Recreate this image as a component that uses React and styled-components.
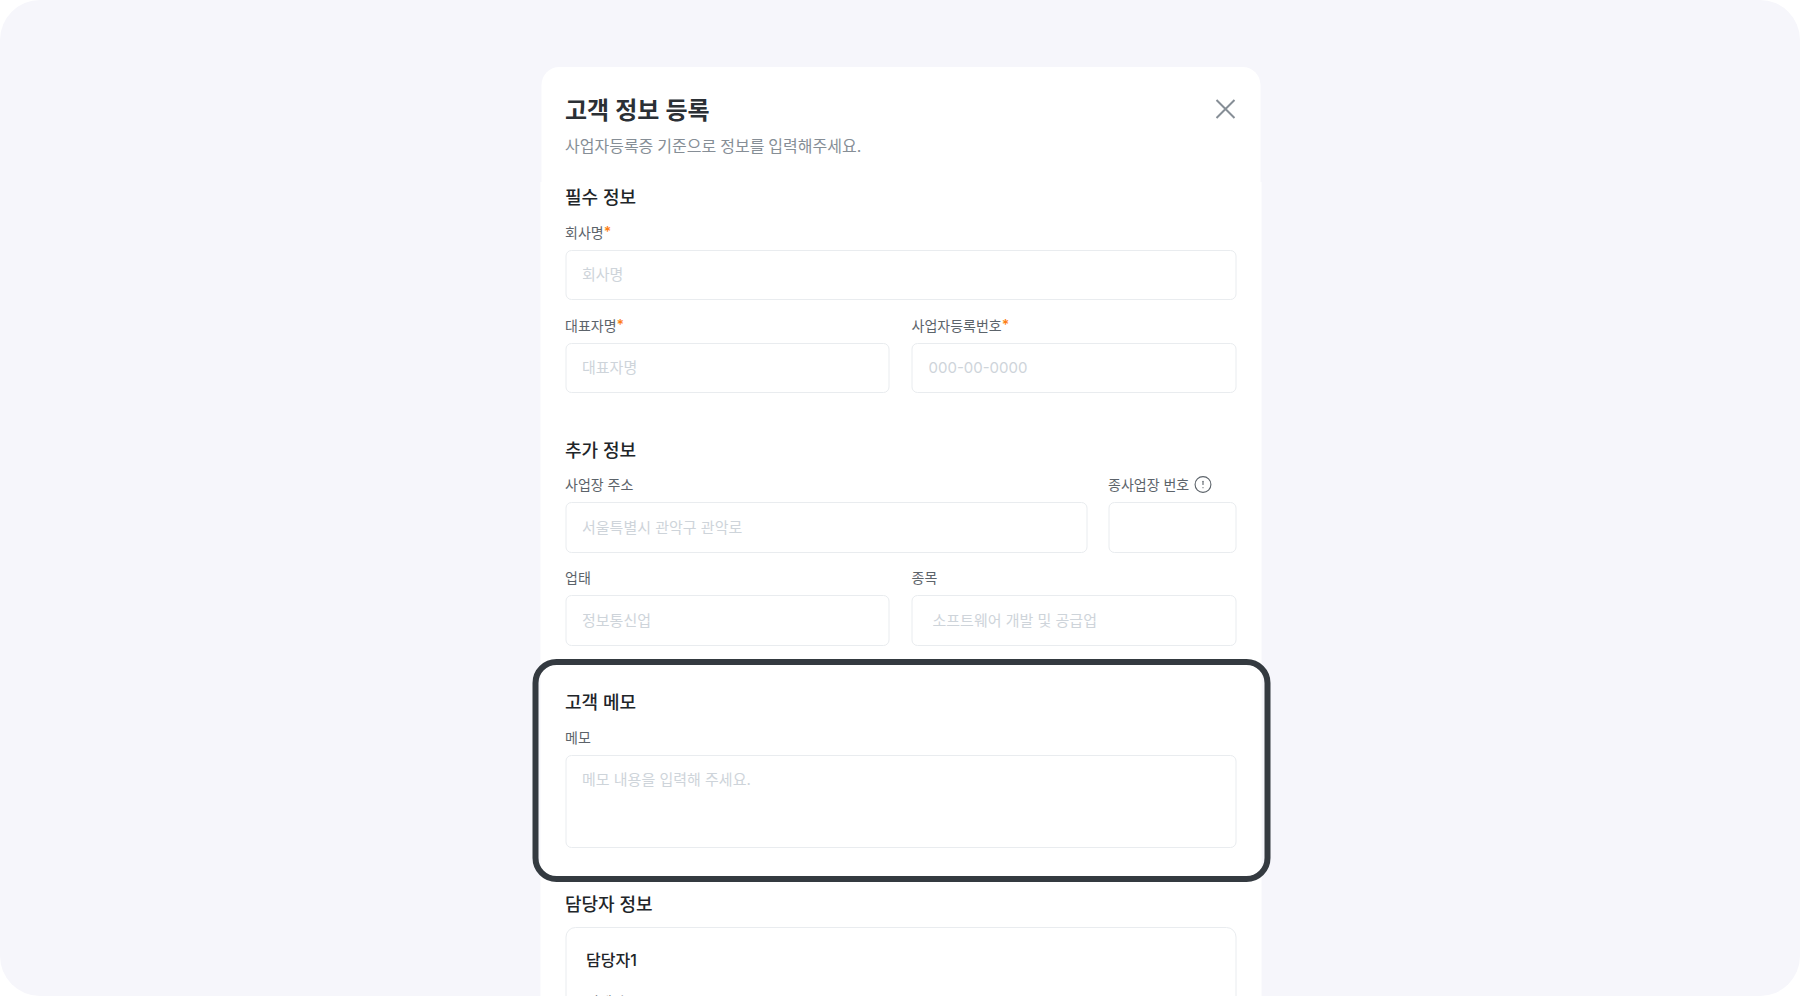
import React from 'react';
import styled, { createGlobalStyle } from 'styled-components';
import { CircleAlert } from 'lucide-react';

const GlobalStyle = createGlobalStyle`
    html, body {
        margin: 0;
        background-color: #fff;
        overflow: hidden;
    }

    * {
        box-sizing: border-box;
    }
`;

const Page = styled.div`
    height: 996px;
    padding-top: 67px;
    background-color: #f6f6fb;
    border-radius: 40px;
    overflow: hidden;
    font-family: 'Inter', 'Noto Sans CJK KR', 'Noto Sans', sans-serif;
`;

const Modal = styled.div`
    width: 721px;
    margin: 0 auto;
    transform: translateX(0.5px);
`;

const ModalHeader = styled.header`
    position: relative;
    margin: 0 1px;
    padding: 28px 24px 0;
    height: 115px;
    background-color: #fff;
    border-radius: 18px 18px 0 0;
`;

const ModalTitle = styled.h2`
    margin: 0;
    font-size: 24px;
    line-height: 32px;
    font-weight: 600;
    color: #2b3035;
`;

const ModalSubtitle = styled.p`
    margin: 6.5px 0 0;
    font-size: 16px;
    line-height: 24px;
    font-weight: 400;
    word-spacing: -0.5px;
    color: #868e96;
`;

const CloseButton = styled.button`
    position: absolute;
    top: 32px;
    right: 25px;
    width: 20px;
    height: 20px;
    padding: 0;
    border: none;
    background: none;
    color: #868e96;
`;

const ModalBody = styled.div`
    padding: 2px 25px 0;
    background-color: #fff;
`;

const Section = styled.section`
    position: relative;
    margin-bottom: ${props => props.$gap || 43.5}px;
`;

const SectionTitle = styled.h3`
    height: 26px;
    margin: 0 0 ${props => props.$gap || 12.5}px;
    padding-top: 2px;
    font-size: 18px;
    line-height: 23px;
    font-weight: 500;
    color: #212529;
`;

const Row = styled.div`
    display: grid;
    grid-template-columns: ${props => props.$columns || '1fr'};
    column-gap: ${props => props.$gap || 22}px;
    margin-top: ${props => (props.$first ? 0 : 15.5)}px;
`;

const Field = styled.div`
    min-width: 0;
`;

const Label = styled.label`
    display: flex;
    align-items: center;
    height: 20px;
    margin-bottom: 7px;
    padding-bottom: 2px;
    font-size: 14px;
    font-weight: 400;
    color: #5c636a;
`;

const Required = styled.span`
    color: #fd7e14;
    font-weight: 600;
`;

const InfoIcon = styled(CircleAlert)`
    margin-left: 4px;
    color: #5c636a;
`;

const Input = styled.input`
    display: block;
    width: 100%;
    height: 50.5px;
    padding: 0 16px 0 ${props => props.$indent || 16}px;
    background-color: #fff;
    border: 1px solid #e9ecef;
    border-radius: 6px;
    font-family: inherit;
    font-size: 15px;

    &::placeholder {
        color: #ced4da;
    }
`;

const TextArea = styled.textarea`
    display: block;
    width: 100%;
    height: 93px;
    padding: 13px 16px;
    background-color: #fff;
    border: 1px solid #e9ecef;
    border-radius: 6px;
    font-family: inherit;
    font-size: 15px;
    line-height: 22px;
    resize: none;

    &::placeholder {
        color: #ced4da;
    }
`;

const Highlight = styled.div`
    position: absolute;
    top: -30px;
    right: -34px;
    bottom: -34px;
    left: -33px;
    border: 6px solid #343a40;
    border-radius: 24px;
    pointer-events: none;
`;

const ManagerCard = styled.div`
    padding: 20.5px 20px;
    border: 1px solid #e9ecef;
    border-radius: 10px;
`;

const ManagerTitle = styled.h4`
    margin: 0 0 20px;
    font-size: 16px;
    line-height: 24px;
    font-weight: 500;
    color: #212529;
`;

const FormField = ({ label, required, icon, placeholder, indent }) => (
    <Field>
        <Label>
            {label}
            {required && <Required>*</Required>}
            {icon && <InfoIcon size={19} strokeWidth={1.4} />}
        </Label>
        <Input placeholder={placeholder} $indent={indent} />
    </Field>
);

const App = () => (
    <Page>
        <GlobalStyle />
        <Modal>
            <ModalHeader>
                <ModalTitle>고객 정보 등록</ModalTitle>
                <ModalSubtitle>사업자등록증 기준으로 정보를 입력해주세요.</ModalSubtitle>
                <CloseButton>
                    <svg width="20" height="20" viewBox="0 0 20 20" fill="none" stroke="currentColor" strokeWidth="2">
                        <path d="M1 1L19 19M19 1L1 19" />
                    </svg>
                </CloseButton>
            </ModalHeader>
            <ModalBody>
                <Section>
                    <SectionTitle>필수 정보</SectionTitle>
                    <Row $first>
                        <FormField label="회사명" required placeholder="회사명" />
                    </Row>
                    <Row $columns="1fr 1fr">
                        <FormField label="대표자명" required placeholder="대표자명" />
                        <FormField label="사업자등록번호" required placeholder="000-00-0000" />
                    </Row>
                </Section>
                <Section>
                    <SectionTitle>추가 정보</SectionTitle>
                    <Row $first $columns="1fr 128px" $gap={21}>
                        <FormField label="사업장 주소" placeholder="서울특별시 관악구 관악로" />
                        <FormField label="종사업장 번호" icon />
                    </Row>
                    <Row $columns="1fr 1fr">
                        <FormField label="업태" placeholder="정보통신업" />
                        <FormField label="종목" placeholder="소프트웨어 개발 및 공급업" indent={20} />
                    </Row>
                </Section>
                <Section $gap={43}>
                    <SectionTitle>고객 메모</SectionTitle>
                    <Field>
                        <Label>메모</Label>
                        <TextArea placeholder="메모 내용을 입력해 주세요." />
                    </Field>
                    <Highlight />
                </Section>
                <Section>
                    <SectionTitle $gap={10}>담당자 정보</SectionTitle>
                    <ManagerCard>
                        <ManagerTitle>담당자1</ManagerTitle>
                        <Label>이메일<Required>*</Required></Label>
                    </ManagerCard>
                </Section>
            </ModalBody>
        </Modal>
    </Page>
);

export default App;
